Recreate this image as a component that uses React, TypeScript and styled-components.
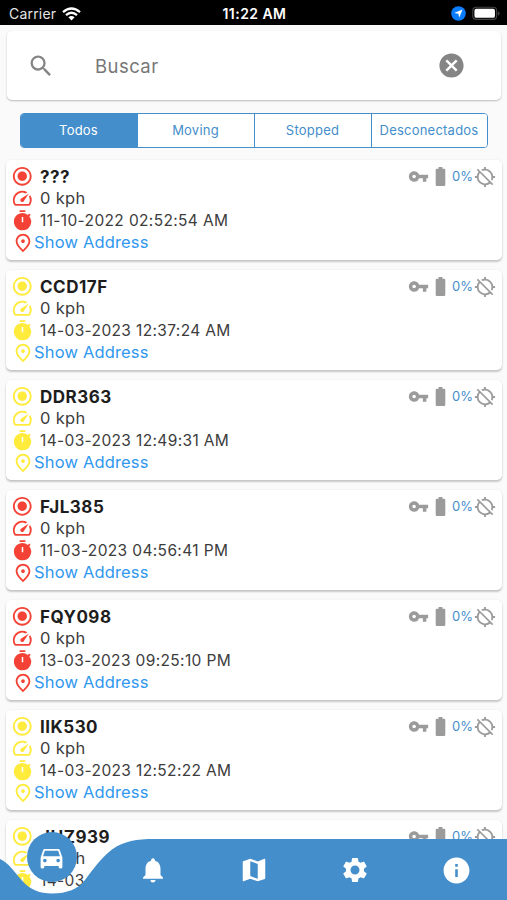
import React from "react";
import styled, { createGlobalStyle } from "styled-components";
import {
  MdSearch, MdCancel, MdRadioButtonChecked, MdSpeed, MdOutlinePlace, MdVpnKey, MdBatteryFull,
  MdLocationDisabled, MdDirectionsCar, MdNotifications, MdMap, MdSettings, MdInfo,
} from "react-icons/md";

const GlobalStyle = createGlobalStyle`
  * { box-sizing: border-box; }
  body { margin: 0; background: #fafafa; font-family: Inter, "Liberation Sans", sans-serif; }
  svg { display: block; flex: none; }
`;

const BLUE = "#448ecb";
const RED = "#f44336";
const YELLOW = "#ffeb3b";

const Screen = styled.div`
  position: relative;
  display: flex;
  flex-direction: column;
  width: 507px;
  height: 900px;
  overflow: hidden;
  background: #fafafa;
`;

const StatusBar = styled.header`
  flex: none;
  display: grid;
  grid-template-columns: 1fr auto 1fr;
  align-items: center;
  height: 25px;
  padding: 2px 7px 0 9px;
  background: #000;
  color: #e4e4e4;
  font-size: 14px;
  letter-spacing: 0.2px;
`;

const StatusSide = styled.div<{ $end?: boolean }>`
  display: flex;
  align-items: center;
  gap: 6px;
  justify-content: ${(p) => (p.$end ? "flex-end" : "flex-start")};
`;

const Clock = styled.div`
  color: #fff;
  font-size: 14px;
  font-weight: 600;
  letter-spacing: 0.45px;
`;

const SearchCard = styled.div`
  flex: none;
  display: flex;
  align-items: center;
  height: 69px;
  margin: 6px 6px 0 7px;
  padding: 0 35px 0 20px;
  border-radius: 5px;
  background: #fff;
  color: #858585;
  box-shadow: 0 1px 2px rgba(0, 0, 0, 0.26);
`;

const Placeholder = styled.div`
  flex: 1;
  padding-left: 40px;
  font-size: 18.5px;
  letter-spacing: 0.45px;
  color: #777;
`;

const Tabs = styled.div`
  flex: none;
  display: grid;
  grid-template-columns: 116px 117px 117px 1fr;
  height: 35px;
  margin: 13px 19px 0 20px;
  border: 1px solid ${BLUE};
  border-radius: 4px;
  overflow: hidden;
  background: #fff;
`;

const Tab = styled.div<{ $active?: boolean }>`
  display: flex;
  align-items: center;
  justify-content: center;
  padding: 0 1px 1px 0;
  border-left: ${(p) => (p.$active ? "none" : `1px solid ${BLUE}`)};
  background: ${(p) => (p.$active ? BLUE : "#fff")};
  color: ${(p) => (p.$active ? "#fff" : BLUE)};
  font-size: 13px;
  letter-spacing: 0.22px;
  white-space: nowrap;
`;

const List = styled.main`
  display: flex;
  flex-direction: column;
  gap: 10px;
  padding: 12px 5px 0 6px;
`;

const Card = styled.article`
  flex: none;
  display: flex;
  justify-content: space-between;
  height: 100px;
  padding: 5.5px 6px 0 5px;
  border-radius: 5px;
  background: #fff;
  box-shadow: 0 2px 2px rgba(0, 0, 0, 0.2), 0 0 2px rgba(0, 0, 0, 0.08);
`;

const Details = styled.div<{ $color: string }>`
  display: flex;
  flex-direction: column;

  svg { color: ${(p) => p.$color}; }
`;

const Line = styled.div<{ $tight?: boolean }>`
  display: flex;
  align-items: center;
  gap: ${(p) => (p.$tight ? "0" : "6.5px")};
  padding-left: ${(p) => (p.$tight ? "1px" : "0")};
  height: 22px;
  color: #3c3c3c;
  white-space: nowrap;
`;

const Name = styled.span`
  color: #1d1d1d;
  font-size: 17px;
  font-weight: 700;
  letter-spacing: 0.5px;
`;

const Speed = styled.span`
  padding-bottom: 1px;
  font-size: 16.5px;
  letter-spacing: 0.3px;
`;

const Stamp = styled.span`
  margin-left: -0.5px;
  font-size: 15.5px;
  letter-spacing: 0.36px;
`;

const Address = styled.span`
  padding-bottom: 2px;
  color: #3098ee;
  font-size: 16.5px;
  letter-spacing: 0.16px;
`;

const Indicators = styled.div`
  display: flex;
  align-items: center;
  height: 22px;
  color: #9b9b9b;
`;

const Percent = styled.span`
  margin: 0 1px 1px 0;
  color: ${BLUE};
  font-size: 13px;
`;

const NavBar = styled.nav`
  position: absolute;
  inset: auto 0 0 0;
  height: 70px;
`;

const Wave = styled.svg`
  position: absolute;
  inset: 0;
`;

const NavItems = styled.div`
  position: relative;
  display: grid;
  grid-template-columns: repeat(5, 1fr);
  height: 70px;
  color: #fff;
`;

const NavItem = styled.div`
  display: flex;
  justify-content: center;
  padding: 24.5px 0 0 1px;
`;

const ActiveItem = styled.div`
  display: flex;
  align-items: center;
  justify-content: center;
  width: 50px;
  height: 50px;
  margin: 2px 0 0 26.5px;
  border-radius: 50%;
  background: ${BLUE};
`;

function WifiIcon() {
  return (
    <svg width="19" height="14" viewBox="0 0 19 14" fill="none" stroke="#fff" strokeWidth="2.3">
      <path d="M1 5.1Q9.5-2.1 18 5.1M4 8.2Q9.5 3.4 15 8.2" />
      <path d="M6.4 10.2Q9.5 7.8 12.6 10.2L9.5 13.4Z" fill="#fff" stroke="none" />
    </svg>
  );
}

function LocationBadge() {
  return (
    <svg width="15" height="15" viewBox="0 0 15 15">
      <circle cx="7.5" cy="7.5" r="7.3" fill="#0a7cff" />
      <path d="M11.5 3.4 8.2 11.7 7.4 7.8 3.2 6.9Z" fill="#fff" />
    </svg>
  );
}

function BatteryIcon() {
  return (
    <svg width="28" height="15" viewBox="0 0 30 15">
      <rect x="0.8" y="0.8" width="25.6" height="13" rx="3.6" fill="none" stroke="#444" strokeWidth="1.2" />
      <rect x="2.6" y="2.5" width="22" height="9.6" rx="2" fill="#fff" />
      <path d="M27.7 5q2 .8 2 2.4t-2 2.4Z" fill="#444" />
    </svg>
  );
}

function TimerIcon() {
  return (
    <svg width="23" height="22" viewBox="0 0.8 24 23" fill="currentColor">
      <path d="M9 1h6v2H9zM19.03 7.39l1.42-1.42c-.43-.51-.9-.99-1.41-1.41l-1.42 1.42A8.96 8.96 0 0 0 12 4c-4.97 0-9 4.03-9 9s4.02 9 9 9a8.99 8.99 0 0 0 7.03-14.61zM12.8 13.500h-1.600V8h1.600z" />
    </svg>
  );
}

const vehicles = [
  { name: "???", time: "11-10-2022 02:52:54 AM", color: RED },
  { name: "CCD17F", time: "14-03-2023 12:37:24 AM", color: YELLOW },
  { name: "DDR363", time: "14-03-2023 12:49:31 AM", color: YELLOW },
  { name: "FJL385", time: "11-03-2023 04:56:41 PM", color: RED },
  { name: "FQY098", time: "13-03-2023 09:25:10 PM", color: RED },
  { name: "IIK530", time: "14-03-2023 12:52:22 AM", color: YELLOW },
  { name: "JHZ939", time: "14-03-2023 12:51:08 AM", color: YELLOW },
];

function VehicleCard({ name, time, color }: (typeof vehicles)[number]) {
  return (
    <Card>
      <Details $color={color}>
        <Line><MdRadioButtonChecked size={22.5} /><Name>{name}</Name></Line>
        <Line><MdSpeed size={22.5} /><Speed>0 kph</Speed></Line>
        <Line><TimerIcon /><Stamp>{time}</Stamp></Line>
        <Line $tight><MdOutlinePlace size={22} /><Address>Show Address</Address></Line>
      </Details>
      <Indicators>
        <MdVpnKey size={21} />
        <MdBatteryFull size={23} />
        <Percent>0%</Percent>
        <MdLocationDisabled size={22} />
      </Indicators>
    </Card>
  );
}

export default function App() {
  return (
    <Screen>
      <GlobalStyle />
      <StatusBar>
        <StatusSide>Carrier<WifiIcon /></StatusSide>
        <Clock>11:22 AM</Clock>
        <StatusSide $end><LocationBadge /><BatteryIcon /></StatusSide>
      </StatusBar>
      <SearchCard>
        <MdSearch size={28} />
        <Placeholder>Buscar</Placeholder>
        <MdCancel size={29} />
      </SearchCard>
      <Tabs>
        <Tab $active>Todos</Tab>
        <Tab>Moving</Tab>
        <Tab>Stopped</Tab>
        <Tab>Desconectados</Tab>
      </Tabs>
      <List>{vehicles.map((v) => <VehicleCard key={v.name} {...v} />)}</List>
      <NavBar>
        <Wave width="507" height="70" viewBox="0 0 507 70">
          <path fill={BLUE} d="M0 29C9 33 15 43 22 50.500C30 60 40 63.500 52 63.500C67 63.500 78 59 85 50C95 37 100 29 112 19.500C124 11 137 9 154 9H507V70H0Z" />
        </Wave>
        <NavItems>
          <ActiveItem><MdDirectionsCar size={29} /></ActiveItem>
          <NavItem><MdNotifications size={30} /></NavItem>
          <NavItem><MdMap size={30} /></NavItem>
          <NavItem><MdSettings size={30} /></NavItem>
          <NavItem><MdInfo size={31} /></NavItem>
        </NavItems>
      </NavBar>
    </Screen>
  );
}
